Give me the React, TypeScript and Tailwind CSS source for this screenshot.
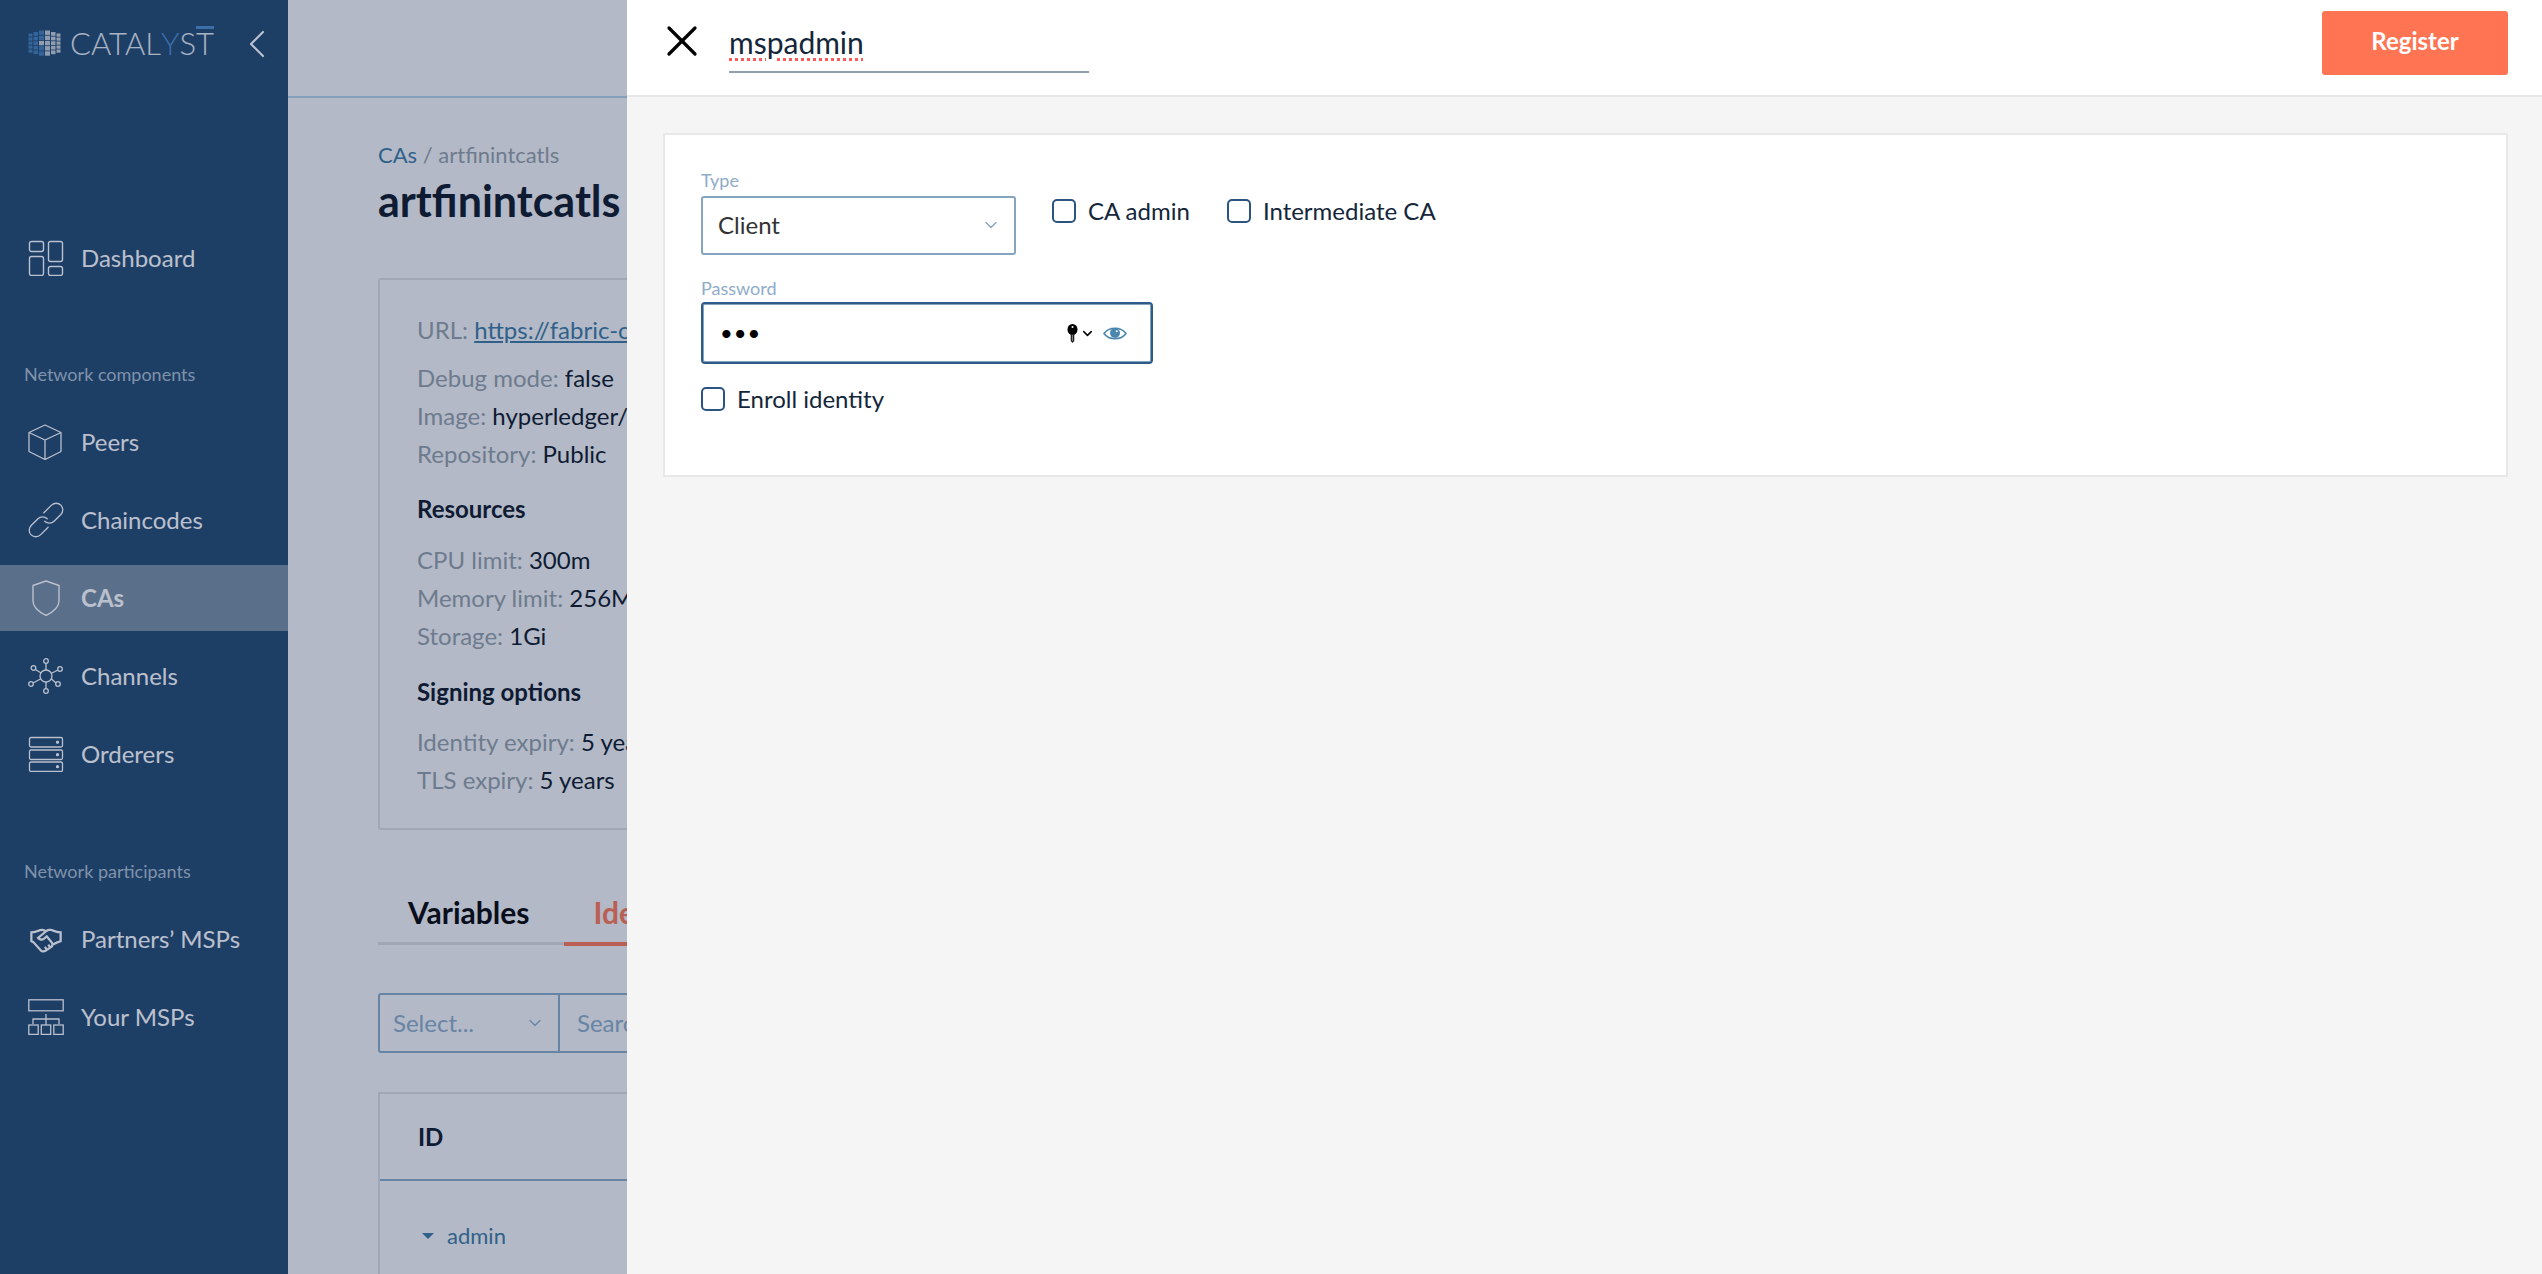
import { ReactNode } from 'react';
import { ChevronDown, ChevronLeft, X } from 'lucide-react';
import { LiaHandshake } from 'react-icons/lia';

const DashboardIcon = () => (
  <svg width="36" height="36" viewBox="0 0 36 36" fill="none" stroke="currentColor" strokeWidth="1.4">
    <rect x="1.5" y="1.5" width="14" height="10" rx="2" />
    <rect x="20.5" y="1.5" width="14" height="20" rx="2" />
    <rect x="1.5" y="16.5" width="14" height="19" rx="2" />
    <rect x="20.5" y="26.5" width="14" height="9" rx="2" />
  </svg>
);

const CubeIcon = () => (
  <svg width="36" height="36" viewBox="0 0 36 36" fill="none" stroke="currentColor" strokeWidth="1.3" strokeLinejoin="round">
    <path d="M17 1 L33 8.5 V27.5 L17 35.5 L1 27.5 V8.5 Z M1 8.5 L17 16 L33 8.5 M17 16 V35.5" />
  </svg>
);

const ChainIcon = () => (
  <svg width="36" height="36" viewBox="3 3 30 30" fill="none" stroke="currentColor" strokeWidth="1.1" strokeLinecap="round">
    <g transform="rotate(45 18 18)">
      <path d="M12.5 15 V6 a5.5 5.5 0 0 1 11 0 V14 a5.5 5.5 0 0 1 -5.5 5.5" />
      <path d="M23.5 21 V30 a5.5 5.5 0 0 1 -11 0 V22 a5.5 5.5 0 0 1 5.5 -5.5" />
    </g>
  </svg>
);

const ShieldIcon = () => (
  <svg width="36" height="36" viewBox="0 0 36 36" fill="none" stroke="currentColor" strokeWidth="1.4" strokeLinejoin="round">
    <path d="M18 1 L31 5.5 V21 C31 27 25 32 18 35.5 C11 32 5 27 5 21 V5.5 Z" />
  </svg>
);

const ChannelsIcon = () => (
  <svg width="36" height="36" viewBox="0 0 36 36" fill="none" stroke="currentColor" strokeWidth="1.3">
    <circle cx="18" cy="18" r="6" />
    <circle cx="18" cy="3" r="2.3" />
    <circle cx="18" cy="33" r="2.3" />
    <circle cx="5.5" cy="10" r="2.3" />
    <circle cx="32" cy="11" r="2.3" />
    <circle cx="3" cy="26" r="2.3" />
    <circle cx="30" cy="26" r="2.3" />
    <path d="M18 5.5 V12 M18 24 V30.5 M7.5 11.5 L13 15 M30 12 L23 15.5 M5 25 L12.5 21 M28 25 L23.5 21" />
  </svg>
);

const OrderersIcon = () => (
  <svg width="36" height="36" viewBox="0 0 36 36" fill="none" stroke="currentColor" strokeWidth="1.3">
    <rect x="1.5" y="1.5" width="33" height="9.5" rx="1.5" />
    <rect x="1.5" y="14" width="33" height="9.5" rx="1.5" />
    <rect x="1.5" y="26" width="33" height="9.5" rx="1.5" />
    <circle cx="29.5" cy="6.2" r="1" fill="currentColor" />
    <circle cx="29.5" cy="18.7" r="1" fill="currentColor" />
    <circle cx="29.5" cy="30.7" r="1" fill="currentColor" />
  </svg>
);

const TreeIcon = () => (
  <svg width="36" height="36" viewBox="0 0 36 36" fill="none" stroke="currentColor" strokeWidth="1.3">
    <rect x="0.8" y="0.8" width="34.4" height="11" />
    <rect x="0.8" y="26" width="9.4" height="9.4" />
    <rect x="13.3" y="26" width="9.4" height="9.4" />
    <rect x="25.8" y="26" width="9.4" height="9.4" />
    <path d="M18 15 V26 M5 25 V20 H31 V25" />
  </svg>
);

// columns bulge towards the middle so the grid reads as a rounded cube
const cubeColumns = [
  { x: 0, w: 4, h: 20 },
  { x: 5, w: 4.5, h: 23 },
  { x: 10.5, w: 5, h: 26 },
  { x: 16.5, w: 5, h: 26 },
  { x: 22.5, w: 4.5, h: 23 },
  { x: 28, w: 4, h: 20 },
];

const LogoCube = () => (
  <svg width="33" height="27" viewBox="0 0 32 27">
    {cubeColumns.map((col, c) =>
      [0, 1, 2, 3, 4].map((r) => (
        <rect
          key={`${c}-${r}`}
          x={col.x}
          y={13.5 - col.h / 2 + (r * col.h) / 5}
          width={col.w}
          height={col.h / 5 - 0.8}
          fill={c < 3 && !(c === 2 && r === 2) ? '#3f7cb6' : '#c3ccd6'}
        />
      ))
    )}
  </svg>
);

const KeyIcon = () => (
  <svg width="11" height="19" viewBox="0 0 11 19">
    <ellipse cx="5.5" cy="5.5" rx="5" ry="5.5" fill="#000" />
    <circle cx="5.5" cy="3" r="1" fill="#fff" />
    <path d="M3.7 10 H7.3 V17 L5.5 19 L3.7 17 Z" fill="#222" />
    <path d="M5.5 11 V17" stroke="#999" strokeWidth="0.8" />
  </svg>
);

const EyeIcon = () => (
  <svg width="24" height="15" viewBox="0 0 24 15">
    <path d="M1 7.5 C6 0.5 18 0.5 23 7.5 C18 14.5 6 14.5 1 7.5 Z" fill="none" stroke="#4a86ad" strokeWidth="1.6" />
    <circle cx="12" cy="7" r="5" fill="#4a86ad" />
    <circle cx="13.8" cy="5.2" r="1" fill="#fff" />
  </svg>
);

const NavItem = ({ icon, label, active }: { icon: ReactNode; label: string; active?: boolean }) => (
  <div className={`flex h-[66px] items-center gap-[17px] pl-[28px] text-[24px] ${active ? 'bg-[#768b9e] font-bold' : ''}`}>
    <span className="flex w-[36px] justify-center">{icon}</span>
    <span>{label}</span>
  </div>
);

const InfoRow = ({ label, value, className = '' }: { label: string; value: ReactNode; className?: string }) => (
  <div className={`h-[38px] whitespace-nowrap leading-[38px] ${className}`}>
    <span className="text-[#939da5]">{label}</span> <span>{value}</span>
  </div>
);

const Checkbox = ({ label }: { label: string }) => (
  <label className="flex h-[30px] items-center gap-[12px] text-[24px] text-[#14263a]">
    <span className="h-[24px] w-[24px] rounded-[5px] border-2 border-[#2b5580] bg-white" />
    {label}
  </label>
);

const Sidebar = () => (
  <aside className="flex w-[288px] shrink-0 flex-col bg-[#1f456b] text-white">
    <div className="flex h-[98px] items-start pl-[28px]">
      <div className="mt-[30px]">
        <LogoCube />
      </div>
      <div className="ml-[9px] mt-[23px] flex text-[31px] font-light leading-[40px] text-[#e6ecf2]">
        CATAL<span className="text-[#4a8ccb]">Y</span>S
        <span className="relative">
          T<span className="absolute left-0 right-0 top-[3px] h-[3px] bg-[#4a8ccb]" />
        </span>
      </div>
      <ChevronLeft className="ml-[19px] mt-[20px] h-[48px] w-[48px]" strokeWidth={1.1} />
    </div>
    <div className="mt-[127px]">
      <NavItem icon={<DashboardIcon />} label="Dashboard" />
    </div>
    <div className="mb-[21px] ml-[24px] mt-[70px] h-[27px] text-[18px] leading-[27px] text-[#abbecd]">Network components</div>
    <div className="flex flex-col gap-[12px]">
      <NavItem icon={<CubeIcon />} label="Peers" />
      <NavItem icon={<ChainIcon />} label="Chaincodes" />
      <NavItem icon={<ShieldIcon />} label="CAs" active />
      <NavItem icon={<ChannelsIcon />} label="Channels" />
      <NavItem icon={<OrderersIcon />} label="Orderers" />
    </div>
    <div className="mb-[21px] ml-[24px] mt-[71px] h-[27px] text-[18px] leading-[27px] text-[#abbecd]">Network participants</div>
    <div className="flex flex-col gap-[12px]">
      <NavItem icon={<LiaHandshake size={42} />} label="Partners’ MSPs" />
      <NavItem icon={<TreeIcon />} label="Your MSPs" />
    </div>
  </aside>
);

const CaPage = () => (
  <main className="min-w-0 flex-1 overflow-hidden bg-[#f5f5f5] text-[24px] text-[#0a1423]">
    <div className="h-[98px] border-b-2 border-[#b4cfe3]" />
    <div className="pl-[90px]">
      <div className="mt-[42px] h-[30px] text-[22px] leading-[30px] text-[#939da5]">
        <span className="text-[#39789f]">CAs</span> / artfinintcatls
      </div>
      <h1 className="mt-[5px] h-[52px] text-[43px] font-bold leading-[52px]">artfinintcatls</h1>
      <section className="mt-[51px] h-[552px] rounded-[3px] border-2 border-[#dcdcdc] pl-[37px] pt-[31px]">
        <InfoRow label="URL:" value={<span className="text-[#39789f] underline">https://fabric-ca</span>} />
        <InfoRow className="mt-[10px]" label="Debug mode:" value="false" />
        <InfoRow label="Image:" value="hyperledger/" />
        <InfoRow label="Repository:" value="Public" />
        <h3 className="mt-[17px] h-[38px] font-bold leading-[38px]">Resources</h3>
        <InfoRow className="mt-[13px]" label="CPU limit:" value="300m" />
        <InfoRow label="Memory limit:" value="256Mi" />
        <InfoRow label="Storage:" value="1Gi" />
        <h3 className="mt-[18px] h-[38px] font-bold leading-[38px]">Signing options</h3>
        <InfoRow className="mt-[12px]" label="Identity expiry:" value="5 years" />
        <InfoRow label="TLS expiry:" value="5 years" />
      </section>
      <div className="mt-[55px] flex h-[60px] items-center border-b-[3px] border-[#dcdcdc] pb-[2px] pl-[30px] text-[30px] font-bold">
        <span className="text-black">Variables</span>
        <span className="relative ml-[64px] text-[#ff7452]">
          Identities
          <span className="absolute -bottom-[11px] -left-[30px] -right-[30px] h-[4px] bg-[#ff7452]" />
        </span>
      </div>
      <div className="mt-[48px] flex h-[60px] rounded-[3px] border-2 border-[#8aa9c6] text-[#8aa9c6]">
        <div className="flex w-[180px] items-center justify-between border-r-2 border-[#8aa9c6] px-[13px]">
          Select...
          <ChevronDown size={20} strokeWidth={1.5} />
        </div>
        <div className="flex items-center pl-[17px]">Search</div>
      </div>
      <section className="mt-[39px] h-[300px] border-2 border-[#dcdcdc]">
        <div className="flex h-[87px] items-center border-b-2 border-[#8aa9c6] pl-[38px] font-bold">ID</div>
        <div className="mt-[38px] flex items-center pl-[42px] text-[22px] text-[#39789f]">
          <span className="h-0 w-0 border-x-[6px] border-t-[6px] border-x-transparent border-t-[#39789f]" />
          <span className="ml-[13px]">admin</span>
        </div>
      </section>
    </div>
  </main>
);

const RegisterPanel = () => (
  <div className="absolute bottom-0 right-0 top-0 flex w-[1915px] flex-col bg-[#f5f5f5] text-[#14263a]">
    <header className="flex h-[97px] items-start border-b-2 border-[#e8e8e8] bg-white">
      <X className="ml-[29px] mt-[15px] h-[52px] w-[52px] text-black" strokeWidth={1.5} />
      <div className="ml-[21px] mt-[21px] h-[52px] w-[360px] border-b-2 border-[#90a0ab] text-[30px] leading-[42px]">
        <span className="underline decoration-[#ff5a5a] decoration-dotted decoration-[3px] underline-offset-[4px]">mspadmin</span>
      </div>
      <button className="ml-auto mr-[34px] mt-[11px] h-[64px] w-[186px] rounded-[3px] bg-[#ff7452] pb-[5px] text-[24px] font-bold text-white">
        Register
      </button>
    </header>
    <section className="ml-[36px] mr-[34px] mt-[36px] h-[344px] border-2 border-[#e8e8e8] bg-white pl-[36px] pt-[32px]">
      <div className="flex items-start">
        <div>
          <div className="mb-[2px] h-[27px] text-[18px] leading-[27px] text-[#8fabc9]">Type</div>
          <div className="flex h-[59px] w-[315px] items-center justify-between rounded-[3px] border-2 border-[#86a3c0] pb-[2px] pl-[15px] pr-[13px] text-[24px] text-[#333]">
            Client
            <ChevronDown className="text-[#86a3c0]" size={20} strokeWidth={1.5} />
          </div>
        </div>
        <div className="ml-[36px] mt-[29px] flex gap-[37px]">
          <Checkbox label="CA admin" />
          <Checkbox label="Intermediate CA" />
        </div>
      </div>
      <div className="mt-[20px] h-[27px] text-[18px] leading-[27px] text-[#8fabc9]">Password</div>
      <div className="flex h-[62px] w-[452px] items-center rounded-[4px] border-2 border-[#2f5a87] pl-[17px] pr-[24px] shadow-[inset_0_0_0_1px_#86a3c0]">
        <span className="text-[22px] leading-none tracking-[1px] text-black">•••</span>
        <span className="ml-auto flex items-center">
          <KeyIcon />
          <ChevronDown className="ml-[2px] text-black" size={15} strokeWidth={2.4} />
          <span className="ml-[8px] flex">
            <EyeIcon />
          </span>
        </span>
      </div>
      <div className="mt-[20px]">
        <Checkbox label="Enroll identity" />
      </div>
    </section>
  </div>
);

export default function App() {
  return (
    <div className="relative flex h-[1274px] w-[2542px] overflow-hidden [font-family:Lato,sans-serif]">
      <Sidebar />
      <CaPage />
      <div className="absolute inset-0 bg-[#193059]/30" />
      <RegisterPanel />
    </div>
  );
}
